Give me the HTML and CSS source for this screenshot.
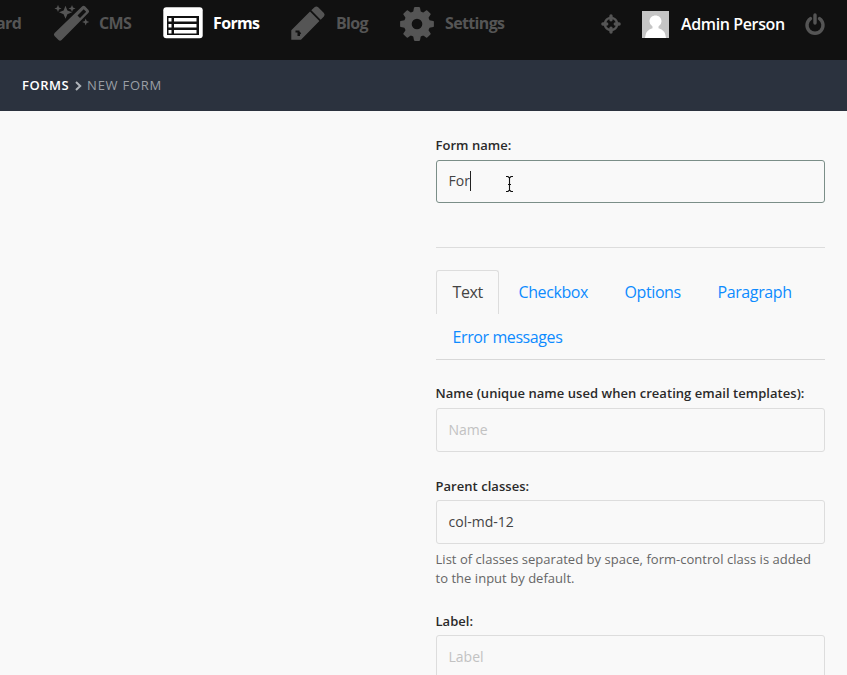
FILE: index.html
```html
<!DOCTYPE html>
<html lang="en">
<head>
<meta charset="utf-8">
<title>New form</title>
<link rel="stylesheet" href="styles.css">
</head>
<body>
<header class="topbar">
  <nav class="nav">
    <a class="nav-item dash">ard</a>
    <a class="nav-item cms"><svg width="38" height="38" viewBox="0 0 38 38" fill="currentColor"><path fill-rule="evenodd" d="M29 1.600Q30.600 0 32.200 1.600L35.500 5Q36.700 6.400 35.500 7.800L8.600 35Q7 36.500 5.500 35L1.500 31Q.2 29.500 1.600 28.100ZM30.700 4.200L24.500 10.500L27 13L33.200 6.800Z"/><path d="M12.500.800l1.900 4.600 4.700 1.900-4.700 1.900L12.500 13.800l-1.900-4.600-4.600-1.900 4.600-1.900ZM5-.2l1 2.600 2.600 1-2.600 1-1 2.600-1-2.600-2.600-1L4 2.400ZM19 0l1 2.500 2.500 1-2.500 1-1 2.500-1-2.500-2.500-1 2.500-1ZM32.700 13.500l1 2.500 2.600 1-2.600 1-1 2.600-1-2.600-2.600-1 2.600-1Z"/></svg><span>CMS</span></a>
    <a class="nav-item forms active"><svg width="40" height="32" viewBox="0 0 40 32"><rect x=".3" y=".3" width="39.400" height="31" rx="3" fill="#fff"/><path fill="#111" d="M4 9h32v19H4Z"/><path fill="#fff" d="M5.500 11h3v3.500h-3zM11 11h22.500v3.500H11zM5.500 17h3v3.500h-3zM11 17h22.500v3.500H11zM5.500 23h3v3.500h-3zM11 23h22.500v3.500H11z"/></svg><span>Forms</span></a>
    <a class="nav-item blog"><svg width="35" height="35" viewBox="0 0 35 35"><path fill="currentColor" d="M.3 24.200 19 5.600 28.400 15 10 33.700H.3ZM20.300 4.300 23.500 1.200Q25.400-.4 27.200 1.300L32.900 7Q34.400 8.800 32.900 10.500L29.700 13.700Z"/><path fill="none" stroke="#111" stroke-width="2" d="M4.500 25.500H7.500V29H9M7.500 26l2 2"/></svg><span>Blog</span></a>
    <a class="nav-item settings"><svg width="36" height="36" viewBox="-18 -18 36 36"><g fill="currentColor"><g id="teeth"><path d="M-4-11-3-16.300Q-2.800-16.900-2-16.900H2Q2.800-16.900 3-16.300L4-11V11L3 16.300Q2.800 16.900 2 16.900H-2Q-2.800 16.900-3 16.300L-4 11Z"/></g><use href="#teeth" transform="rotate(45)"/><use href="#teeth" transform="rotate(90)"/><use href="#teeth" transform="rotate(135)"/><circle r="13"/></g><circle r="5.300" fill="#111"/></svg><span>Settings</span></a>
  </nav>
  <div class="tools">
    <svg class="target" width="20" height="20" viewBox="0 0 20 20" fill="none" stroke="currentColor"><circle cx="10" cy="10" r="6.200" stroke-width="2.300"/><path stroke-width="3.400" stroke-linecap="round" d="M10 1.900v3.800M10 14.300v3.800M1.900 10h3.800M14.300 10h3.800"/></svg>
    <svg class="avatar" width="27" height="27" viewBox="0 0 27 27"><path fill="#c5c5c5" d="M0 0h27v27H0z"/><path fill="#fff" d="M3 27Q3.500 19 10.500 17.200V15.500Q7.500 13.500 7.500 10.500C7.500 2.500 19.500 2.500 19.500 10.500Q19.500 13.500 16.500 15.500V17.200Q23.500 19 24 27Z"/></svg>
    <span class="user">Admin Person</span>
    <svg class="power" width="20" height="22" viewBox="0 0 20 22" fill="none" stroke="currentColor" stroke-width="3.400" stroke-linecap="round"><path d="M5.500 5.600A8 8 0 1 0 14.500 5.600M10 2V10"/></svg>
  </div>
</header>
<div class="crumbs"><b>FORMS</b><svg width="7" height="10" viewBox="0 0 7 10" fill="none" stroke="#b0b5bb" stroke-width="2"><path d="M1 1l4.200 4L1 9"/></svg><span>NEW FORM</span></div>
<main class="form">
  <label class="label first">Form name:</label>
  <div class="input focus"><span>For</span><i class="caret"></i>
    <svg class="ibeam" width="9" height="18" viewBox="0 0 9 18" fill="none" stroke="#111" stroke-width="1.100"><path d="M1 1.500H3L4.500 3 6 1.500H8M4.500 3V15M1 16.500H3L4.500 15 6 16.500H8M3 9.500H6"/></svg>
  </div>
  <div class="rule"></div>
  <div class="tabs">
    <a class="tab current">Text</a><a class="tab checkbox">Checkbox</a><a class="tab options">Options</a><a class="tab">Paragraph</a><a class="tab errors">Error messages</a>
  </div>
  <label class="label name">Name (unique name used when creating email templates):</label>
  <div class="input placeholder">Name</div>
  <label class="label parent">Parent classes:</label>
  <div class="input">col-md-12</div>
  <p class="help">List of classes separated by space, form-control class is added<br>to the input by default.</p>
  <label class="label last">Label:</label>
  <div class="input placeholder">Label</div>
</main>
</body>
</html>
```
FILE: styles.css
```css
* { box-sizing: border-box; }
body { margin: 0; height: 675px; overflow: hidden; background: #f9f9f9; font-family: "Open Sans", sans-serif; color: #444; }
svg { display: block; flex: none; overflow: visible; }
.topbar { height: 60px; background: #111; display: flex; justify-content: space-between; }
.nav { display: flex; height: 47px; }
.nav-item { display: flex; align-items: center; color: #555; font-size: 16px; letter-spacing: -.65px; font-weight: 700; white-space: nowrap; }
.nav-item span { margin: 0 0 1px 10px; }
.dash { width: 57px; margin-left: -4px; padding-bottom: 1px; }
.cms { width: 110px; }
.nav-item.cms span { margin-left: 8px; }
.forms { width: 128px; }
.forms svg { margin-top: -1px; }
.blog { width: 108px; }
.active { color: #fff; }
.tools { display: flex; align-items: center; height: 48px; color: #555; padding-right: 22px; }
.avatar { margin: 0 12px 0 21px; }
.user { width: 104px; margin-right: 20px; font-size: 16px; letter-spacing: -.38px; font-weight: 600; color: #fff; white-space: nowrap; }
.crumbs { height: 51px; background: #2b323e; display: flex; align-items: center; padding: 0 0 2px 22px; font-size: 13px; letter-spacing: .5px; color: #9a9fa5; }
.crumbs b { font-weight: 600; color: #fff; }
.crumbs svg { margin: 2px 5px 0 6px; }
.crumbs span { letter-spacing: .75px; }
.form { width: 389px; margin-left: 436px; padding-top: 24px; }
.label { display: block; height: 20px; line-height: 20px; margin: 24px 0 5px -.5px; font-size: 13px; letter-spacing: .04px; font-weight: 600; color: #2a2a2a; white-space: nowrap; }
.label.first { margin-top: 0; }
.input { position: relative; height: 44px; border: 1px solid #ddd; border-radius: 3px; padding: 0 12px 2px 11.5px; display: flex; align-items: center; font-size: 14px; color: #444; }
.focus { height: 43px; border-color: #7b8e88; }
.caret { width: 1px; height: 20px; background: #222; }
.placeholder { color: #c2c2c2; }
.ibeam { position: absolute; left: 68px; top: 14px; }
.rule { height: 1px; background: #ddd; margin: 44px 0 22px; }
.tabs { display: flex; flex-wrap: wrap; border-bottom: 1px solid #d8d8d8; height: 90px; margin-bottom: 23px; }
.tab { height: 45px; line-height: 43px; padding: 1px 16.5px; font-size: 16px; letter-spacing: -.4px; color: #0d8bff; white-space: nowrap; }
.current { width: 63px; height: 44px; padding: 0 15.5px; border: 1px solid #ddd; border-bottom: 0; border-radius: 3px 3px 0 0; color: #444; margin-right: 3px; }
.checkbox { width: 106px; }
.options { width: 93px; }
.label.name { margin-top: 0; }
.label.parent, .label.last { margin-bottom: 4px; }
.help { margin: 6px 0 0 -.5px; font-size: 13px; letter-spacing: .03px; line-height: 19px; color: #666; white-space: nowrap; }
.help + .label { margin-top: 23px; }
```
